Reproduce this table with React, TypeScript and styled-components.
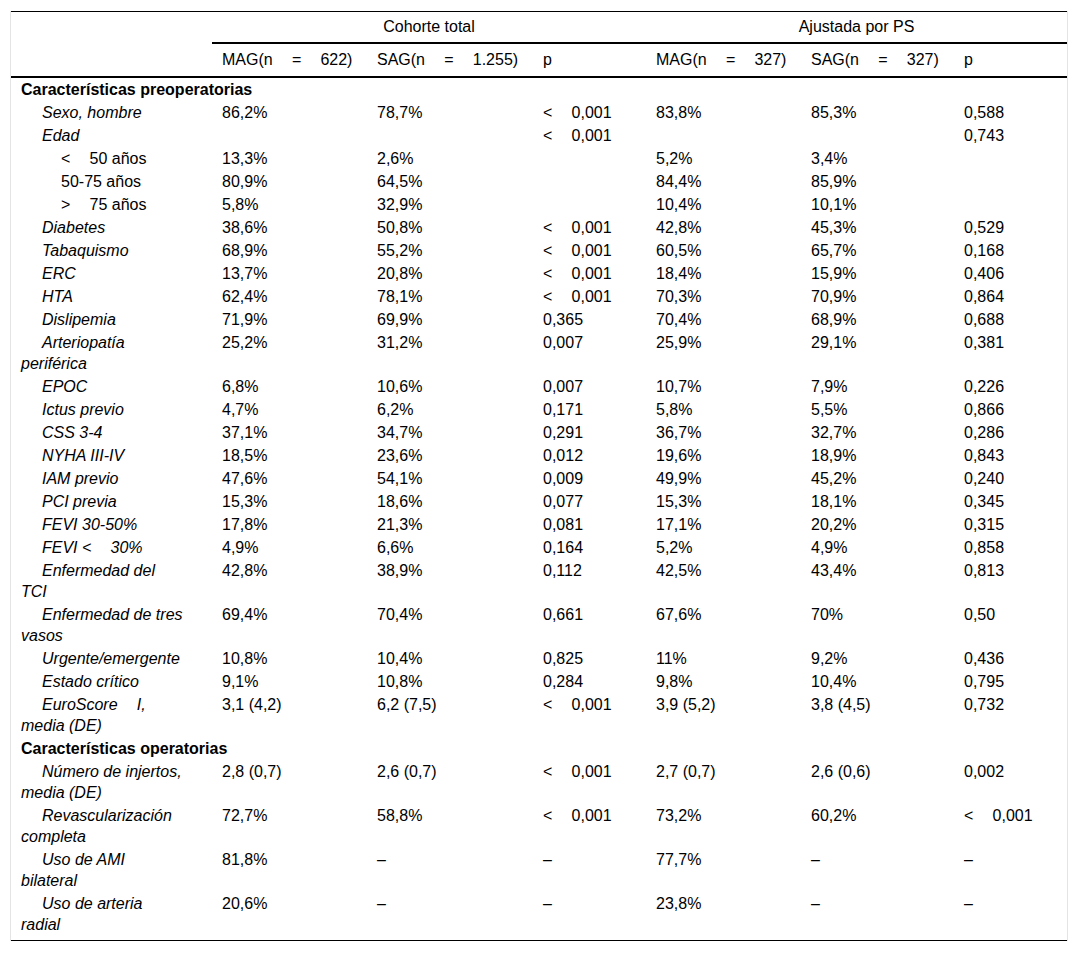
import { FC } from "react";
import styled, { createGlobalStyle } from "styled-components";

const GlobalStyle = createGlobalStyle`
  body {
    margin: 0;
    background: #fff;
    color: #000;
    font-family: "Liberation Sans", Arial, sans-serif;
  }
`

const Frame = styled.div`
  box-sizing: border-box;
  width: 1058px;
  margin: 11px 0 0 10px;
  border-left: 1px solid #e4e4e4;
  border-right: 1px solid #e4e4e4;
`

const Table = styled.table`
  width: 100%;
  table-layout: fixed;
  border-collapse: separate;
  border-spacing: 0;
  border-top: 1px solid #000;
  border-bottom: 1px solid #000;
  font-size: 16px;
`

const Col = styled.col<{ $w: number }>`
  width: ${(p) => p.$w}px;
`

const GroupHead = styled.th<{ $line?: boolean }>`
  padding: 4px 10px;
  line-height: 22px;
  font-weight: normal;
  text-align: center;
  border-bottom: 2px solid ${(p) => (p.$line ? "#000" : "transparent")};
`

const ColHead = styled.th`
  padding: 5px 10px;
  line-height: 22px;
  font-weight: normal;
  text-align: left;
  white-space: nowrap;
  border-bottom: 2px solid #000;
`

const Cell = styled.td<{ $last?: boolean }>`
  padding: 1px 10px ${(p) => (p.$last ? "5px" : "1px")};
  line-height: 21px;
  vertical-align: top;
  white-space: nowrap;
`

const Label = styled(Cell)<{ $level: number }>`
  text-indent: ${(p) => (p.$level === 2 ? 40 : 21)}px;
  font-style: ${(p) => (p.$level === 1 ? "italic" : "normal")};
`

const Section = styled.td`
  padding: 1px 10px;
  line-height: 21px;
  font-weight: bold;
  white-space: nowrap;
`

const GAP = "\u2003\u2009";
const LT = `<${GAP}0,001`;

type Row =
  | { section: string }
  | { label: string[]; level: number; v: string[] };

const rows: Row[] = [
  { section: "Características preoperatorias" },
  { label: ["Sexo, hombre"], level: 1, v: ["86,2%", "78,7%", LT, "83,8%", "85,3%", "0,588"] },
  { label: ["Edad"], level: 1, v: ["", "", LT, "", "", "0,743"] },
  { label: [`<${GAP}50 años`], level: 2, v: ["13,3%", "2,6%", "", "5,2%", "3,4%", ""] },
  { label: ["50-75 años"], level: 2, v: ["80,9%", "64,5%", "", "84,4%", "85,9%", ""] },
  { label: [`>${GAP}75 años`], level: 2, v: ["5,8%", "32,9%", "", "10,4%", "10,1%", ""] },
  { label: ["Diabetes"], level: 1, v: ["38,6%", "50,8%", LT, "42,8%", "45,3%", "0,529"] },
  { label: ["Tabaquismo"], level: 1, v: ["68,9%", "55,2%", LT, "60,5%", "65,7%", "0,168"] },
  { label: ["ERC"], level: 1, v: ["13,7%", "20,8%", LT, "18,4%", "15,9%", "0,406"] },
  { label: ["HTA"], level: 1, v: ["62,4%", "78,1%", LT, "70,3%", "70,9%", "0,864"] },
  { label: ["Dislipemia"], level: 1, v: ["71,9%", "69,9%", "0,365", "70,4%", "68,9%", "0,688"] },
  { label: ["Arteriopatía", "periférica"], level: 1, v: ["25,2%", "31,2%", "0,007", "25,9%", "29,1%", "0,381"] },
  { label: ["EPOC"], level: 1, v: ["6,8%", "10,6%", "0,007", "10,7%", "7,9%", "0,226"] },
  { label: ["Ictus previo"], level: 1, v: ["4,7%", "6,2%", "0,171", "5,8%", "5,5%", "0,866"] },
  { label: ["CSS 3-4"], level: 1, v: ["37,1%", "34,7%", "0,291", "36,7%", "32,7%", "0,286"] },
  { label: ["NYHA III-IV"], level: 1, v: ["18,5%", "23,6%", "0,012", "19,6%", "18,9%", "0,843"] },
  { label: ["IAM previo"], level: 1, v: ["47,6%", "54,1%", "0,009", "49,9%", "45,2%", "0,240"] },
  { label: ["PCI previa"], level: 1, v: ["15,3%", "18,6%", "0,077", "15,3%", "18,1%", "0,345"] },
  { label: ["FEVI 30-50%"], level: 1, v: ["17,8%", "21,3%", "0,081", "17,1%", "20,2%", "0,315"] },
  { label: [`FEVI <${GAP}30%`], level: 1, v: ["4,9%", "6,6%", "0,164", "5,2%", "4,9%", "0,858"] },
  { label: ["Enfermedad del", "TCI"], level: 1, v: ["42,8%", "38,9%", "0,112", "42,5%", "43,4%", "0,813"] },
  { label: ["Enfermedad de tres", "vasos"], level: 1, v: ["69,4%", "70,4%", "0,661", "67,6%", "70%", "0,50"] },
  { label: ["Urgente/emergente"], level: 1, v: ["10,8%", "10,4%", "0,825", "11%", "9,2%", "0,436"] },
  { label: ["Estado crítico"], level: 1, v: ["9,1%", "10,8%", "0,284", "9,8%", "10,4%", "0,795"] },
  { label: [`EuroScore${GAP}I,`, "media (DE)"], level: 1, v: ["3,1 (4,2)", "6,2 (7,5)", LT, "3,9 (5,2)", "3,8 (4,5)", "0,732"] },
  { section: "Características operatorias" },
  { label: ["Número de injertos,", "media (DE)"], level: 1, v: ["2,8 (0,7)", "2,6 (0,7)", LT, "2,7 (0,7)", "2,6 (0,6)", "0,002"] },
  { label: ["Revascularización", "completa"], level: 1, v: ["72,7%", "58,8%", LT, "73,2%", "60,2%", LT] },
  { label: ["Uso de AMI", "bilateral"], level: 1, v: ["81,8%", "–", "–", "77,7%", "–", "–"] },
  { label: ["Uso de arteria", "radial"], level: 1, v: ["20,6%", "–", "–", "23,8%", "–", "–"] },
];

const widths = [201, 155, 166, 113, 155, 153, 113];
const heads = [
  `MAG(n${GAP}=${GAP}622)`,
  `SAG(n${GAP}=${GAP}1.255)`,
  "p",
  `MAG(n${GAP}=${GAP}327)`,
  `SAG(n${GAP}=${GAP}327)`,
  "p",
];

const App: FC = () => {
  return (
    <>
      <GlobalStyle />
      <Frame>
        <Table>
          <colgroup>
            {widths.map((w, i) => <Col key={i} $w={w} />)}
          </colgroup>
          <thead>
            <tr>
              <GroupHead />
              <GroupHead colSpan={3} $line>Cohorte total</GroupHead>
              <GroupHead colSpan={3} $line>Ajustada por PS</GroupHead>
            </tr>
            <tr>
              <ColHead />
              {heads.map((h, i) => <ColHead key={i}>{h}</ColHead>)}
            </tr>
          </thead>
          <tbody>
            {rows.map((row, i) => {
              if ("section" in row) {
                return (
                  <tr key={i}>
                    <Section colSpan={7}>{row.section}</Section>
                  </tr>
                );
              }
              const last = i === rows.length - 1;
              return (
                <tr key={i}>
                  <Label $level={row.level} $last={last}>
                    {row.label.map((l, j) => (
                      <span key={j}>
                        {j > 0 && <br />}
                        {l}
                      </span>
                    ))}
                  </Label>
                  {row.v.map((v, j) => <Cell key={j} $last={last}>{v}</Cell>)}
                </tr>
              );
            })}
          </tbody>
        </Table>
      </Frame>
    </>
  );
}

export default App;
